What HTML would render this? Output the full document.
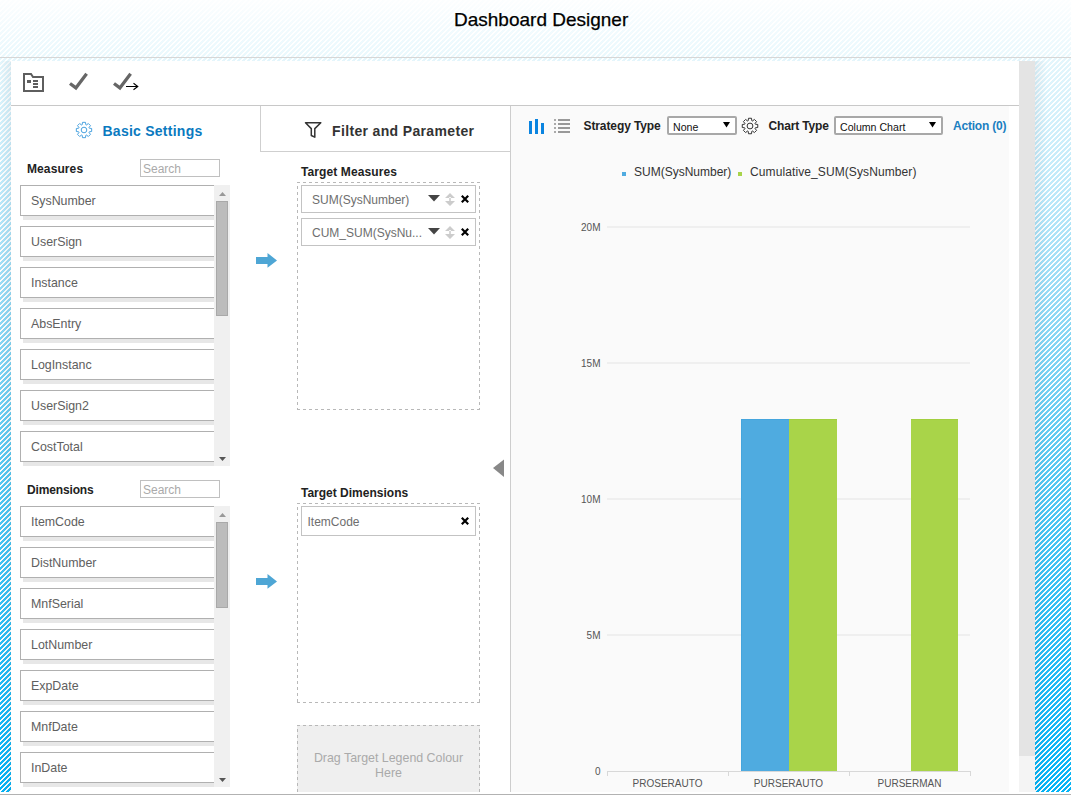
<!DOCTYPE html>
<html><head><meta charset="utf-8"><title>Dashboard Designer</title>
<style>
html,body{margin:0;padding:0}
body{width:1071px;height:795px;position:relative;overflow:hidden;background:#fff;font-family:"Liberation Sans",sans-serif}
.t{position:absolute;white-space:nowrap;line-height:0}
</style></head><body>
<svg width="1071" height="795" style="position:absolute;left:0;top:0">
<defs>
<linearGradient id="hg" gradientUnits="userSpaceOnUse" x1="0" y1="0" x2="0" y2="57">
<stop offset="0" stop-color="#fcfeff"/><stop offset="1" stop-color="#e9f8fd"/></linearGradient>
<linearGradient id="bg" gradientUnits="userSpaceOnUse" x1="0" y1="58" x2="0" y2="792">
<stop offset="0" stop-color="#e4f6fc"/><stop offset="0.17" stop-color="#c0eafa"/><stop offset="0.33" stop-color="#94daf5"/><stop offset="0.53" stop-color="#5ecaf1"/><stop offset="0.88" stop-color="#1cb9f5"/><stop offset="1" stop-color="#05b4f6"/></linearGradient>
<pattern id="st" patternUnits="userSpaceOnUse" x="0" y="0" width="5" height="5"><rect x="0" y="0" width="2" height="1" fill="#fff"/><rect x="4" y="1" width="2" height="1" fill="#fff"/><rect x="-1" y="1" width="2" height="1" fill="#fff"/><rect x="3" y="2" width="2" height="1" fill="#fff"/><rect x="2" y="3" width="2" height="1" fill="#fff"/><rect x="1" y="4" width="2" height="1" fill="#fff"/></pattern>
</defs>
<rect x="0" y="0" width="1071" height="57" fill="url(#hg)"/>
<rect x="0" y="58" width="1071" height="734" fill="url(#bg)"/>
<rect x="0" y="0" width="1071" height="792" fill="url(#st)"/>
<linearGradient id="shl" x1="0" y1="0" x2="1" y2="0"><stop offset="0" stop-color="#003050" stop-opacity="0"/><stop offset="1" stop-color="#003050" stop-opacity="0.07"/></linearGradient>
<linearGradient id="shr" x1="0" y1="0" x2="1" y2="0"><stop offset="0" stop-color="#003050" stop-opacity="0.07"/><stop offset="1" stop-color="#003050" stop-opacity="0"/></linearGradient>
<rect x="0" y="61" width="11" height="731" fill="url(#shl)"/>
<rect x="1035" y="61" width="12" height="731" fill="url(#shr)"/>
<rect x="0" y="57" width="1071" height="1" fill="#d6d6d6"/>
<rect x="0" y="792" width="1071" height="3" fill="#fff"/>
<rect x="0" y="794" width="1071" height="1" fill="#b2b2b2"/>
</svg><div class="t" style="left:454px;top:20.42px;font-size:19px;font-weight:normal;color:#000;letter-spacing:0px;-webkit-text-stroke:0.25px #000">Dashboard Designer</div><div style="position:absolute;left:11px;top:61px;width:1008px;height:731px;background:#fff"></div><div style="position:absolute;left:1019px;top:61px;width:16px;height:695px;background:#e4e4e4"></div><div style="position:absolute;left:1019px;top:756px;width:16px;height:36px;background:#f4f4f4"></div><svg width="1071" height="795" style="position:absolute;left:0;top:0">
<path d="M24,91 V74 H31 L33,77 H43 V91 Z" fill="none" stroke="#5e5e5e" stroke-width="2"/>
<rect x="27" y="80" width="4" height="3" fill="#5e5e5e"/>
<rect x="33" y="80" width="5" height="2" fill="#5e5e5e"/>
<rect x="33" y="83" width="5" height="2" fill="#5e5e5e"/>
<rect x="33" y="86" width="5" height="2" fill="#5e5e5e"/>
<path d="M70,83.5 L75.9,87.9 L86.6,73.8" fill="none" stroke="#666" stroke-width="3.3"/>
<path d="M114,83.5 L119.9,87.9 L130.6,73.8" fill="none" stroke="#666" stroke-width="3.3"/>
<path d="M126,86.5 H137.5 M133.5,83.2 L137.8,86.5 L133.5,89.8" fill="none" stroke="#000" stroke-width="1.1"/>
</svg><div style="position:absolute;left:11px;top:105px;width:1008px;height:1px;background:#c8c8c8"></div><div style="position:absolute;left:260px;top:106px;width:1px;height:46px;background:#cfcfcf"></div><div style="position:absolute;left:260px;top:151px;width:250px;height:1px;background:#cfcfcf"></div><div style="position:absolute;left:511px;top:106px;width:498px;height:686px;background:#fafafa"></div><div style="position:absolute;left:510px;top:106px;width:1px;height:686px;background:#cdcdcd"></div><svg width="1071" height="795" style="position:absolute;left:0;top:0">
<path d="M82.18,124.71 L82.51,122.34 L85.49,122.34 L85.82,124.71 L86.45,124.97 L88.36,123.53 L90.47,125.64 L89.03,127.55 L89.29,128.18 L91.66,128.51 L91.66,131.49 L89.29,131.82 L89.03,132.45 L90.47,134.36 L88.36,136.47 L86.45,135.03 L85.82,135.29 L85.49,137.66 L82.51,137.66 L82.18,135.29 L81.55,135.03 L79.64,136.47 L77.53,134.36 L78.97,132.45 L78.71,131.82 L76.34,131.49 L76.34,128.51 L78.71,128.18 L78.97,127.55 L77.53,125.64 L79.64,123.53 L81.55,124.97 Z" fill="none" stroke="#4aa3e0" stroke-width="1"/>
<circle cx="84" cy="130" r="2.8" fill="none" stroke="#4aa3e0" stroke-width="1"/>
<path d="M305.5,122.8 H320.8 L314.8,128.6 V137.2 L311.3,135.5 V128.6 Z" fill="none" stroke="#333" stroke-width="1.5" stroke-linejoin="round"/>
<path d="M748.18,120.71 L748.49,118.25 L751.51,118.25 L751.82,120.71 L752.45,120.97 L754.42,119.45 L756.55,121.58 L755.03,123.55 L755.29,124.18 L757.75,124.49 L757.75,127.51 L755.29,127.82 L755.03,128.45 L756.55,130.42 L754.42,132.55 L752.45,131.03 L751.82,131.29 L751.51,133.75 L748.49,133.75 L748.18,131.29 L747.55,131.03 L745.58,132.55 L743.45,130.42 L744.97,128.45 L744.71,127.82 L742.25,127.51 L742.25,124.49 L744.71,124.18 L744.97,123.55 L743.45,121.58 L745.58,119.45 L747.55,120.97 Z" fill="none" stroke="#333" stroke-width="1"/>
<circle cx="750" cy="126" r="2.9" fill="none" stroke="#333" stroke-width="1"/>
</svg><div class="t" style="left:102.5px;top:131.15px;font-size:14px;font-weight:bold;color:#0a7ac0;letter-spacing:0.25px;">Basic Settings</div><div class="t" style="left:332px;top:131.15px;font-size:14px;font-weight:bold;color:#333;letter-spacing:0.35px;">Filter and Parameter</div><div class="t" style="left:27px;top:168.84px;font-size:12px;font-weight:bold;color:#222;letter-spacing:0.1px;">Measures</div><div style="position:absolute;left:140px;top:159px;width:80px;height:18px;box-sizing:border-box;border:1px solid #c0c0c0;background:#fff"></div><div class="t" style="left:143px;top:169.34px;font-size:12px;font-weight:normal;color:#aaa;letter-spacing:0px;">Search</div><div style="position:absolute;left:23px;top:216px;width:195px;height:4px;background:#e7e7e7"></div><div style="position:absolute;left:20px;top:185px;width:200px;height:31px;box-sizing:border-box;border:1px solid #b0b0b0;background:#fff"></div><div class="t" style="left:31px;top:200.70px;font-size:12.4px;font-weight:normal;color:#606060;letter-spacing:0px;">SysNumber</div><div style="position:absolute;left:23px;top:257px;width:195px;height:4px;background:#e7e7e7"></div><div style="position:absolute;left:20px;top:226px;width:200px;height:31px;box-sizing:border-box;border:1px solid #b0b0b0;background:#fff"></div><div class="t" style="left:31px;top:241.70px;font-size:12.4px;font-weight:normal;color:#606060;letter-spacing:0px;">UserSign</div><div style="position:absolute;left:23px;top:298px;width:195px;height:4px;background:#e7e7e7"></div><div style="position:absolute;left:20px;top:267px;width:200px;height:31px;box-sizing:border-box;border:1px solid #b0b0b0;background:#fff"></div><div class="t" style="left:31px;top:282.70px;font-size:12.4px;font-weight:normal;color:#606060;letter-spacing:0px;">Instance</div><div style="position:absolute;left:23px;top:339px;width:195px;height:4px;background:#e7e7e7"></div><div style="position:absolute;left:20px;top:308px;width:200px;height:31px;box-sizing:border-box;border:1px solid #b0b0b0;background:#fff"></div><div class="t" style="left:31px;top:323.70px;font-size:12.4px;font-weight:normal;color:#606060;letter-spacing:0px;">AbsEntry</div><div style="position:absolute;left:23px;top:380px;width:195px;height:4px;background:#e7e7e7"></div><div style="position:absolute;left:20px;top:349px;width:200px;height:31px;box-sizing:border-box;border:1px solid #b0b0b0;background:#fff"></div><div class="t" style="left:31px;top:364.70px;font-size:12.4px;font-weight:normal;color:#606060;letter-spacing:0px;">LogInstanc</div><div style="position:absolute;left:23px;top:421px;width:195px;height:4px;background:#e7e7e7"></div><div style="position:absolute;left:20px;top:390px;width:200px;height:31px;box-sizing:border-box;border:1px solid #b0b0b0;background:#fff"></div><div class="t" style="left:31px;top:405.70px;font-size:12.4px;font-weight:normal;color:#606060;letter-spacing:0px;">UserSign2</div><div style="position:absolute;left:23px;top:462px;width:195px;height:4px;background:#e7e7e7"></div><div style="position:absolute;left:20px;top:431px;width:200px;height:31px;box-sizing:border-box;border:1px solid #b0b0b0;background:#fff"></div><div class="t" style="left:31px;top:446.70px;font-size:12.4px;font-weight:normal;color:#606060;letter-spacing:0px;">CostTotal</div><div style="position:absolute;left:214px;top:185px;width:16px;height:281px;background:#f0f0f0"></div><div style="position:absolute;left:216px;top:201px;width:12px;height:115px;box-sizing:border-box;border:1px solid #a9a9a9;background:#bcbcbc"></div><svg width="16" height="281" style="position:absolute;left:214px;top:185px"><polygon points="5,11 8.5,7 12,11" fill="#999"/><polygon points="5,272 8.5,276 12,272" fill="#555"/></svg><div class="t" style="left:27px;top:489.84px;font-size:12px;font-weight:bold;color:#222;letter-spacing:-0.15px;">Dimensions</div><div style="position:absolute;left:140px;top:480px;width:80px;height:18px;box-sizing:border-box;border:1px solid #c0c0c0;background:#fff"></div><div class="t" style="left:143px;top:490.34px;font-size:12px;font-weight:normal;color:#aaa;letter-spacing:0px;">Search</div><div style="position:absolute;left:23px;top:537px;width:195px;height:4px;background:#e7e7e7"></div><div style="position:absolute;left:20px;top:506px;width:200px;height:31px;box-sizing:border-box;border:1px solid #b0b0b0;background:#fff"></div><div class="t" style="left:31px;top:521.70px;font-size:12.4px;font-weight:normal;color:#606060;letter-spacing:0px;">ItemCode</div><div style="position:absolute;left:23px;top:578px;width:195px;height:4px;background:#e7e7e7"></div><div style="position:absolute;left:20px;top:547px;width:200px;height:31px;box-sizing:border-box;border:1px solid #b0b0b0;background:#fff"></div><div class="t" style="left:31px;top:562.70px;font-size:12.4px;font-weight:normal;color:#606060;letter-spacing:0px;">DistNumber</div><div style="position:absolute;left:23px;top:619px;width:195px;height:4px;background:#e7e7e7"></div><div style="position:absolute;left:20px;top:588px;width:200px;height:31px;box-sizing:border-box;border:1px solid #b0b0b0;background:#fff"></div><div class="t" style="left:31px;top:603.70px;font-size:12.4px;font-weight:normal;color:#606060;letter-spacing:0px;">MnfSerial</div><div style="position:absolute;left:23px;top:660px;width:195px;height:4px;background:#e7e7e7"></div><div style="position:absolute;left:20px;top:629px;width:200px;height:31px;box-sizing:border-box;border:1px solid #b0b0b0;background:#fff"></div><div class="t" style="left:31px;top:644.70px;font-size:12.4px;font-weight:normal;color:#606060;letter-spacing:0px;">LotNumber</div><div style="position:absolute;left:23px;top:701px;width:195px;height:4px;background:#e7e7e7"></div><div style="position:absolute;left:20px;top:670px;width:200px;height:31px;box-sizing:border-box;border:1px solid #b0b0b0;background:#fff"></div><div class="t" style="left:31px;top:685.70px;font-size:12.4px;font-weight:normal;color:#606060;letter-spacing:0px;">ExpDate</div><div style="position:absolute;left:23px;top:742px;width:195px;height:4px;background:#e7e7e7"></div><div style="position:absolute;left:20px;top:711px;width:200px;height:31px;box-sizing:border-box;border:1px solid #b0b0b0;background:#fff"></div><div class="t" style="left:31px;top:726.70px;font-size:12.4px;font-weight:normal;color:#606060;letter-spacing:0px;">MnfDate</div><div style="position:absolute;left:23px;top:783px;width:195px;height:4px;background:#e7e7e7"></div><div style="position:absolute;left:20px;top:752px;width:200px;height:31px;box-sizing:border-box;border:1px solid #b0b0b0;background:#fff"></div><div class="t" style="left:31px;top:767.70px;font-size:12.4px;font-weight:normal;color:#606060;letter-spacing:0px;">InDate</div><div style="position:absolute;left:214px;top:506px;width:16px;height:281px;background:#f0f0f0"></div><div style="position:absolute;left:216px;top:522px;width:12px;height:86px;box-sizing:border-box;border:1px solid #a9a9a9;background:#bcbcbc"></div><svg width="16" height="281" style="position:absolute;left:214px;top:506px"><polygon points="5,11 8.5,7 12,11" fill="#999"/><polygon points="5,272 8.5,276 12,272" fill="#555"/></svg><svg width="24" height="18" style="position:absolute;left:255px;top:252px"><polygon points="1,5 12.5,5 12.5,1 22,8.5 12.5,15.7 12.5,12 1,12" fill="#4ea6d5"/></svg><svg width="24" height="18" style="position:absolute;left:255px;top:573px"><polygon points="1,5 12.5,5 12.5,1 22,8.5 12.5,15.7 12.5,12 1,12" fill="#4ea6d5"/></svg><div class="t" style="left:301px;top:171.84px;font-size:12px;font-weight:bold;color:#222;letter-spacing:0.1px;">Target Measures</div><svg width="1071" height="795" style="position:absolute;left:0;top:0"><path d="M297,182.5 H480 M297,409.5 H480" stroke="#b8b8b8" stroke-width="1" stroke-dasharray="3 3"/><path d="M297.5,186 V410 M479.5,186 V410" stroke="#b8b8b8" stroke-width="1" stroke-dasharray="3 3"/></svg><div style="position:absolute;left:301px;top:185px;width:175px;height:28px;box-sizing:border-box;border:1px solid #c3c3c3;background:#fff"></div><div class="t" style="left:312px;top:199.84px;font-size:12px;font-weight:normal;color:#6e6e6e;letter-spacing:0px;">SUM(SysNumber)</div><svg width="50" height="28" style="position:absolute;left:425px;top:185px"><polygon points="3,10 15,10 9,16.5" fill="#444"/><path d="M25,8 L20,13 H30 Z M25,21 L20,16 H30 Z M24.2,12 h1.6 v5 h-1.6 Z" fill="#ccc"/><path d="M36.8,10.8 L43.2,17.2 M43.2,10.8 L36.8,17.2" stroke="#000" stroke-width="2.2"/></svg><div style="position:absolute;left:301px;top:218px;width:175px;height:28px;box-sizing:border-box;border:1px solid #c3c3c3;background:#fff"></div><div class="t" style="left:312px;top:232.84px;font-size:12px;font-weight:normal;color:#6e6e6e;letter-spacing:0px;">CUM_SUM(SysNu...</div><svg width="50" height="28" style="position:absolute;left:425px;top:218px"><polygon points="3,10 15,10 9,16.5" fill="#444"/><path d="M25,8 L20,13 H30 Z M25,21 L20,16 H30 Z M24.2,12 h1.6 v5 h-1.6 Z" fill="#ccc"/><path d="M36.8,10.8 L43.2,17.2 M43.2,10.8 L36.8,17.2" stroke="#000" stroke-width="2.2"/></svg><svg width="14" height="20" style="position:absolute;left:492px;top:458px"><polygon points="1,10 12,1.5 12,19" fill="#888"/></svg><div class="t" style="left:301px;top:492.84px;font-size:12px;font-weight:bold;color:#222;letter-spacing:0px;">Target Dimensions</div><svg width="1071" height="795" style="position:absolute;left:0;top:0"><path d="M297,503.5 H480 M297,702.5 H480" stroke="#b8b8b8" stroke-width="1" stroke-dasharray="3 3"/><path d="M297.5,507 V703 M479.5,507 V703" stroke="#b8b8b8" stroke-width="1" stroke-dasharray="3 3"/></svg><div style="position:absolute;left:301px;top:506px;width:175px;height:30px;box-sizing:border-box;border:1px solid #c3c3c3;background:#fff"></div><div class="t" style="left:307.5px;top:521.84px;font-size:12px;font-weight:normal;color:#6e6e6e;letter-spacing:0px;">ItemCode</div><svg width="50" height="30" style="position:absolute;left:425px;top:506px"><path d="M36.8,11.8 L43.2,18.2 M43.2,11.8 L36.8,18.2" stroke="#000" stroke-width="2.2"/></svg><div style="position:absolute;left:297px;top:725px;width:183px;height:67px;background:#efefef"></div><svg width="1071" height="795" style="position:absolute;left:0;top:0"><path d="M297,725.5 H480" stroke="#b8b8b8" stroke-width="1" stroke-dasharray="3 3"/><path d="M297.5,729 V792 M479.5,729 V792" stroke="#b8b8b8" stroke-width="1" stroke-dasharray="3 3"/></svg><div class="t" style="left:297px;top:751px;width:183px;text-align:center;font-size:12.4px;line-height:15px;color:#aaa">Drag Target Legend Colour<br>Here</div><svg width="60" height="30" style="position:absolute;left:520px;top:110px">
<rect x="9" y="11" width="3" height="13" fill="#0a84e0"/><rect x="15" y="9" width="3" height="15" fill="#0a84e0"/><rect x="21" y="13" width="3" height="11" fill="#0a84e0"/>
<rect x="34" y="9" width="2" height="2" fill="#aaa"/><rect x="34" y="13" width="2" height="2" fill="#aaa"/><rect x="34" y="17" width="2" height="2" fill="#aaa"/><rect x="34" y="21" width="2" height="2" fill="#aaa"/>
<rect x="38" y="9" width="12" height="2" fill="#999"/><rect x="38" y="13" width="12" height="2" fill="#999"/><rect x="38" y="17" width="12" height="2" fill="#999"/><rect x="38" y="21" width="12" height="2" fill="#999"/>
</svg><div class="t" style="left:583.5px;top:126.14px;font-size:12px;font-weight:bold;color:#222;letter-spacing:-0.1px;">Strategy Type</div><div style="position:absolute;left:667px;top:116px;width:70px;height:19px;box-sizing:border-box;border:2px solid #a8a8a8;border-radius:2px;background:#fff"></div><div class="t" style="left:673px;top:127.33px;font-size:10.6px;font-weight:normal;color:#111;letter-spacing:0px;">None</div><svg width="10" height="8" style="position:absolute;left:723px;top:122px"><polygon points="0,0 7,0 3.5,5.5" fill="#000"/></svg><div class="t" style="left:768.5px;top:126.14px;font-size:12px;font-weight:bold;color:#222;letter-spacing:-0.15px;">Chart Type</div><div style="position:absolute;left:834px;top:116px;width:109px;height:19px;box-sizing:border-box;border:2px solid #a8a8a8;border-radius:2px;background:#fff"></div><div class="t" style="left:840px;top:127.33px;font-size:10.6px;font-weight:normal;color:#111;letter-spacing:0px;">Column Chart</div><svg width="10" height="8" style="position:absolute;left:929px;top:122px"><polygon points="0,0 7,0 3.5,5.5" fill="#000"/></svg><div class="t" style="left:953px;top:126.14px;font-size:12px;font-weight:bold;color:#1a7fc1;letter-spacing:-0.2px;">Action (0)</div><div style="position:absolute;left:622px;top:172px;width:4px;height:4px;background:#4fabe0"></div><div class="t" style="left:634px;top:171.84px;font-size:12px;font-weight:normal;color:#333;letter-spacing:0px;">SUM(SysNumber)</div><div style="position:absolute;left:738px;top:172px;width:4px;height:4px;background:#a8d44a"></div><div class="t" style="left:750px;top:171.84px;font-size:12px;font-weight:normal;color:#333;letter-spacing:0.1px;">Cumulative_SUM(SysNumber)</div><div style="position:absolute;left:607px;top:226px;width:363px;height:2px;background:#efefef"></div><div style="position:absolute;left:607px;top:362px;width:363px;height:2px;background:#efefef"></div><div style="position:absolute;left:607px;top:498px;width:363px;height:2px;background:#efefef"></div><div style="position:absolute;left:607px;top:634px;width:363px;height:2px;background:#efefef"></div><div style="position:absolute;left:520px;top:0;width:81px"><div class="t" style="left:0;top:227.53px;width:80.5px;text-align:right;font-size:10px;color:#555">20M</div><div class="t" style="left:0;top:363.53px;width:80.5px;text-align:right;font-size:10px;color:#555">15M</div><div class="t" style="left:0;top:499.53px;width:80.5px;text-align:right;font-size:10px;color:#555">10M</div><div class="t" style="left:0;top:635.53px;width:80.5px;text-align:right;font-size:10px;color:#555">5M</div><div class="t" style="left:0;top:771.53px;width:80.5px;text-align:right;font-size:10px;color:#555">0</div></div><div style="position:absolute;left:741.3px;top:419.3px;width:47.7px;height:351.7px;background:#4fabe0;box-shadow:inset 1px 1px 0 #45a5dd"></div><div style="position:absolute;left:789.4px;top:419.3px;width:48px;height:351.7px;background:#a9d449;box-shadow:inset 0 1px 0 #a2cf40"></div><div style="position:absolute;left:910.8px;top:419.3px;width:47.6px;height:351.7px;background:#a9d449;box-shadow:inset 0 1px 0 #a2cf40"></div><div style="position:absolute;left:607px;top:771px;width:364px;height:1px;background:#d8d8d8"></div><div style="position:absolute;left:607px;top:771px;width:1px;height:5px;background:#d8d8d8"></div><div style="position:absolute;left:728px;top:771px;width:1px;height:5px;background:#d8d8d8"></div><div style="position:absolute;left:849px;top:771px;width:1px;height:5px;background:#d8d8d8"></div><div style="position:absolute;left:970px;top:771px;width:1px;height:5px;background:#d8d8d8"></div><div class="t" style="left:607.5px;top:783.53px;width:120px;text-align:center;font-size:10px;color:#555">PROSERAUTO</div><div class="t" style="left:728.5px;top:783.53px;width:120px;text-align:center;font-size:10px;color:#555">PURSERAUTO</div><div class="t" style="left:849.5px;top:783.53px;width:120px;text-align:center;font-size:10px;color:#555">PURSERMAN</div>
</body></html>
